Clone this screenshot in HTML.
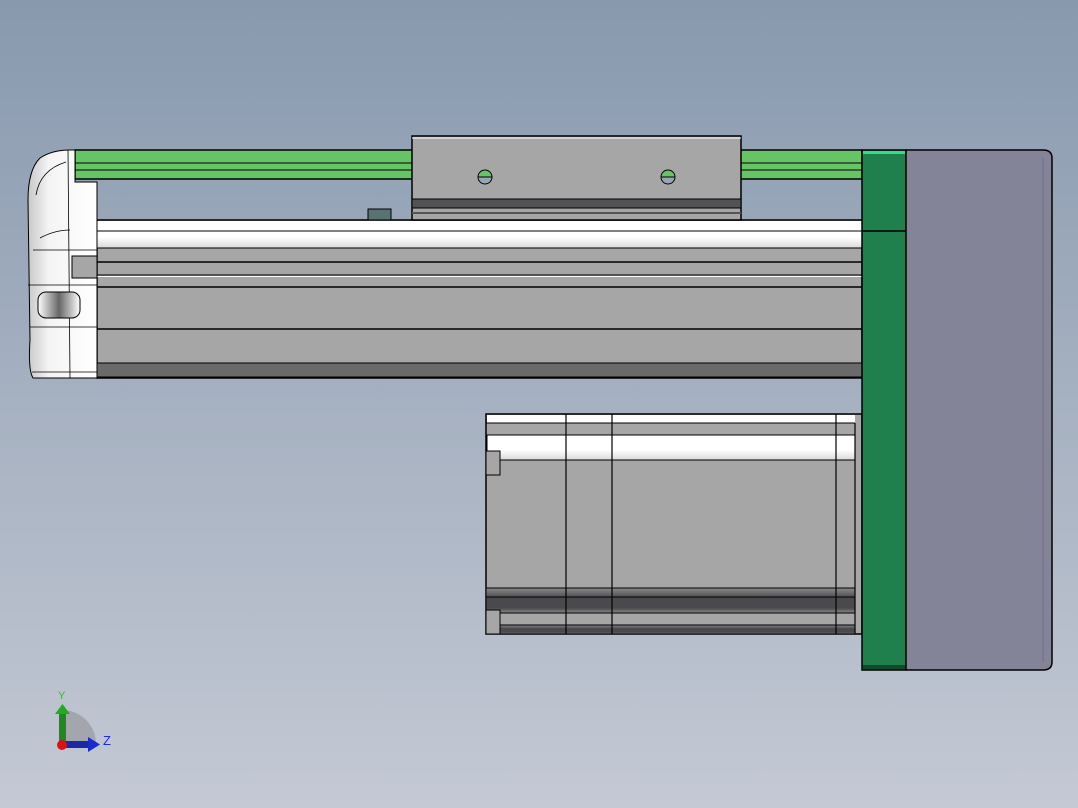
<!DOCTYPE html>
<html><head><meta charset="utf-8"><style>
html,body{margin:0;padding:0;width:1078px;height:808px;overflow:hidden}
svg{display:block}
</style></head><body>
<svg width="1078" height="808" viewBox="0 0 1078 808" xmlns="http://www.w3.org/2000/svg">
<defs>
<linearGradient id="bg" x1="0" y1="0" x2="0" y2="1">
<stop offset="0" stop-color="#8899ae"/><stop offset="1" stop-color="#c4c9d4"/></linearGradient>
<linearGradient id="wb" x1="0" y1="0" x2="0" y2="1">
<stop offset="0" stop-color="#fff"/><stop offset="0.6" stop-color="#fff"/><stop offset="1" stop-color="#d8d8d8"/></linearGradient>
<linearGradient id="dk" x1="0" y1="0" x2="0" y2="1">
<stop offset="0" stop-color="#8a8a8a"/><stop offset="0.4" stop-color="#4a4a4e"/><stop offset="0.8" stop-color="#4a4a4e"/><stop offset="1" stop-color="#8a8a8a"/></linearGradient>
<linearGradient id="cap" x1="0" y1="0" x2="1" y2="0">
<stop offset="0" stop-color="#c8c8c8"/><stop offset="0.3" stop-color="#f4f4f4"/><stop offset="1" stop-color="#ffffff"/></linearGradient>
<linearGradient id="slot" x1="0" y1="0" x2="1" y2="0">
<stop offset="0" stop-color="#fff"/><stop offset="0.5" stop-color="#666"/><stop offset="1" stop-color="#fff"/></linearGradient>
</defs>
<rect width="1078" height="808" fill="url(#bg)"/>

<!-- green rail -->
<rect x="75" y="150" width="787" height="29" fill="#66c466" stroke="#000" stroke-width="1.5"/>
<line x1="75" y1="163" x2="862" y2="163" stroke="#000"/>
<line x1="75" y1="170" x2="862" y2="170" stroke="#000"/>

<!-- body -->
<rect x="97" y="220" width="765" height="158" fill="#a6a6a6" stroke="#000" stroke-width="1.5"/>
<rect x="97" y="221" width="765" height="27" fill="url(#wb)"/>
<line x1="97" y1="231" x2="862" y2="231" stroke="#000"/>
<line x1="97" y1="248" x2="862" y2="248" stroke="#000"/>
<line x1="97" y1="262" x2="862" y2="262" stroke="#000" stroke-width="1.5"/>
<line x1="97" y1="275" x2="862" y2="275" stroke="#000"/>
<line x1="97" y1="276.5" x2="862" y2="276.5" stroke="#fff"/>
<line x1="97" y1="287" x2="862" y2="287" stroke="#000" stroke-width="1.5"/>
<line x1="97" y1="329" x2="862" y2="329" stroke="#000" stroke-width="1.5"/>
<rect x="97" y="363" width="765" height="14" fill="#6a6a6a" stroke="#000"/>

<!-- end cap -->
<path d="M75 150 L75 182 L97 182 L97 378 L33 378 Q28 370 30 340 L28 200 Q28 170 40 158 Q52 150 70 150 Z" fill="url(#cap)" stroke="#000"/>
<path d="M33 250 L97 250 M28 285 L97 285 M30 327 L97 327 M32 372 L97 372 M68 150 L70 378" stroke="#000" fill="none" stroke-width="0.8"/>
<path d="M36 195 Q40 170 66 162 M40 238 Q55 230 70 230" stroke="#000" fill="none" stroke-width="0.8"/>
<rect x="72" y="256" width="25" height="22" fill="#a6a6a6" stroke="#000"/>
<rect x="38" y="292" width="42" height="26" rx="8" fill="url(#slot)" stroke="#000"/>

<!-- knob -->
<rect x="368" y="209" width="23" height="11" fill="#5a7272" stroke="#000"/>

<!-- carriage -->
<rect x="412" y="136" width="329" height="84" fill="#a6a6a6" stroke="#000" stroke-width="1.5"/>
<line x1="412" y1="138" x2="741" y2="138" stroke="#fff"/>
<rect x="412" y="199" width="329" height="9" fill="#525255" stroke="#000"/>
<line x1="412" y1="213" x2="741" y2="213" stroke="#555" stroke-width="2"/>
<g stroke="#000">
<path d="M478 177 A7 7 0 0 1 492 177 Z" fill="#66c466"/><path d="M478 177 A7 7 0 0 0 492 177 Z" fill="#9aa6b8"/>
<path d="M661 177 A7 7 0 0 1 675 177 Z" fill="#66c466"/><path d="M661 177 A7 7 0 0 0 675 177 Z" fill="#9aa6b8"/>
</g>

<!-- lower motor -->
<rect x="486" y="414" width="376" height="220" fill="#a6a6a6" stroke="#000" stroke-width="1.5"/>
<rect x="487" y="415" width="368" height="8" fill="#fff"/>
<line x1="486" y1="423" x2="855" y2="423" stroke="#000"/>
<rect x="487" y="435" width="368" height="25" fill="url(#wb)" stroke="#000"/>
<rect x="486" y="588" width="369" height="25" fill="url(#dk)" stroke="#000"/>
<rect x="486" y="625" width="369" height="9" fill="url(#dk)" stroke="#000"/>
<line x1="486" y1="597" x2="855" y2="597" stroke="#000"/>
<line x1="486" y1="613" x2="855" y2="613" stroke="#000"/>
<rect x="486" y="451" width="14" height="24" fill="#a6a6a6" stroke="#000"/>
<rect x="486" y="610" width="14" height="24" fill="#a6a6a6" stroke="#000"/>
<g stroke="#000" stroke-width="1.2">
<line x1="566" y1="414" x2="566" y2="634"/><line x1="612" y1="414" x2="612" y2="634"/>
<line x1="836" y1="414" x2="836" y2="634"/><line x1="855" y1="423" x2="855" y2="634"/>
</g>

<!-- green plate -->
<rect x="862" y="150" width="44" height="520" fill="#20804d" stroke="#000" stroke-width="1.5"/>
<rect x="863" y="151" width="42" height="3" fill="#33dd88"/>
<line x1="862" y1="231" x2="906" y2="231" stroke="#000" stroke-width="1.5"/>
<rect x="863" y="665" width="42" height="4" fill="#14492d"/>

<!-- purple box -->
<path d="M906 150 L1043 150 Q1052 150 1052 158 L1052 662 Q1052 670 1043 670 L906 670 Z" fill="#848499" stroke="#000" stroke-width="1.5"/>
<line x1="1043" y1="158" x2="1043" y2="662" stroke="#6e6e86"/>

<!-- triad -->
<path d="M62 745 L62 710 A34 34 0 0 1 96 745 Z" fill="#a3a6ac"/>
<rect x="59" y="712" width="7" height="33" fill="#1e8a1e"/>
<path d="M55 714 L62.5 704 L70 714 Z" fill="#22aa22"/>
<rect x="62" y="741" width="28" height="7" fill="#1a2aa0"/>
<path d="M88 737 L100 744.5 L88 752 Z" fill="#1a2acc"/>
<circle cx="62" cy="745" r="5" fill="#dd1111"/>
<text x="58" y="699" font-family="Liberation Sans, sans-serif" font-size="11" fill="#22cc22">Y</text>
<text x="103" y="745" font-family="Liberation Sans, sans-serif" font-size="13" fill="#1a2aee">Z</text>
</svg>
</body></html>
